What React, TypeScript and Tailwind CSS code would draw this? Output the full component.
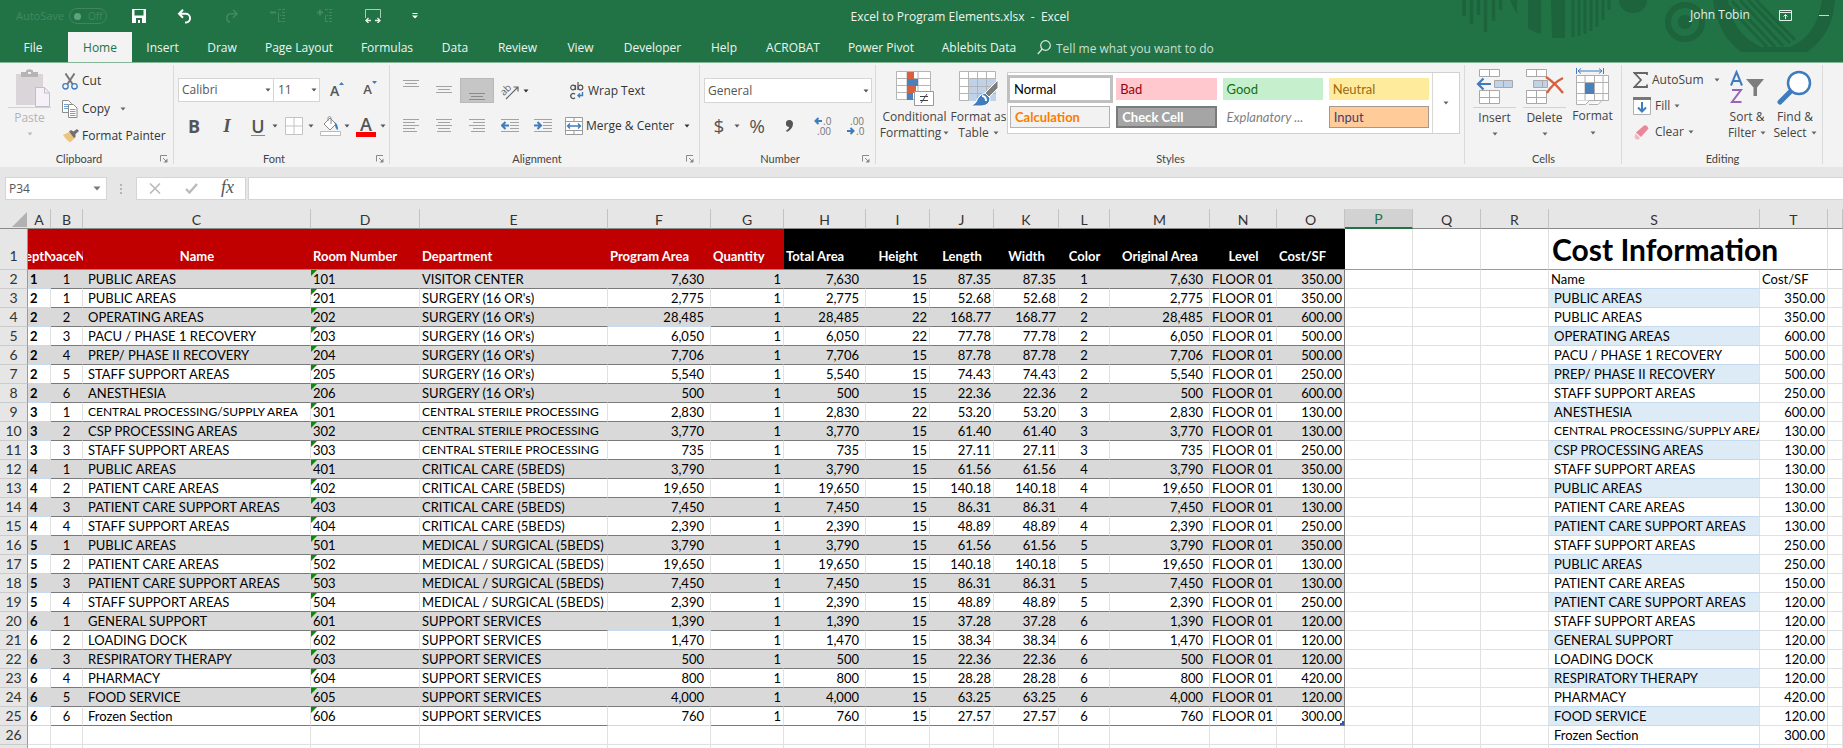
import React from "react";
import clsx from "clsx";

const TABS = [
  { label: "File", width: "w-[68px] pr-[2px]" },
  { label: "Home", width: "w-[64px]", active: true },
  { label: "Insert", width: "w-[61px]" },
  { label: "Draw", width: "w-[58px]" },
  { label: "Page Layout", width: "w-[96px]" },
  { label: "Formulas", width: "w-[80px]" },
  { label: "Data", width: "w-[56px]" },
  { label: "Review", width: "w-[69px]" },
  { label: "View", width: "w-[57px]" },
  { label: "Developer", width: "w-[87px]" },
  { label: "Help", width: "w-[56px]" },
  { label: "ACROBAT", width: "w-[82px]" },
  { label: "Power Pivot", width: "w-[94px]" },
  { label: "Ablebits Data", width: "w-[102px]" },
];

const COLUMNS = [
  { id: "A", width: "w-[23px]" },
  { id: "B", width: "w-[32px]" },
  { id: "C", width: "w-[228px]" },
  { id: "D", width: "w-[109px]" },
  { id: "E", width: "w-[188px]" },
  { id: "F", width: "w-[103px]" },
  { id: "G", width: "w-[73px]" },
  { id: "H", width: "w-[82px]" },
  { id: "I", width: "w-[64px]" },
  { id: "J", width: "w-[64px]" },
  { id: "K", width: "w-[65px]" },
  { id: "L", width: "w-[51px]" },
  { id: "M", width: "w-[100px]" },
  { id: "N", width: "w-[67px]" },
  { id: "O", width: "w-[68px]" },
  { id: "P", width: "w-[68px]", selected: true },
  { id: "Q", width: "w-[68px]" },
  { id: "R", width: "w-[68px]" },
  { id: "S", width: "w-[211px]" },
  { id: "T", width: "w-[68px]" },
  { id: "", width: "" },
];

const HEADINGS = [
  { text: "eptN", cell: "justify-center" },
  { text: "paceN", cell: "justify-center" },
  { text: "Name", cell: "justify-center" },
  { text: "Room Number", cell: "pl-[2px]" },
  { text: "Department", cell: "pl-[2px]" },
  { text: "Program Area", cell: "pl-[2px]" },
  { text: "Quantity", cell: "pl-[2px]" },
  { text: "Total Area", cell: "pl-[2px]" },
  { text: "Height", cell: "justify-center" },
  { text: "Length", cell: "justify-center" },
  { text: "Width", cell: "justify-center" },
  { text: "Color", cell: "justify-center" },
  { text: "Original Area", cell: "justify-center" },
  { text: "Level", cell: "justify-center" },
  { text: "Cost/SF", cell: "pl-[2px]" },
];

type Room = [number, number, string, string, string, string, number, string, string];

// dept, space, name, room number, department, area, height, length, cost
const ROOMS: Room[] = [
  [1, 1, "PUBLIC AREAS", "101", "VISITOR CENTER", "7,630", 15, "87.35", "350.00"],
  [2, 1, "PUBLIC AREAS", "201", "SURGERY (16 OR's)", "2,775", 15, "52.68", "350.00"],
  [2, 2, "OPERATING AREAS", "202", "SURGERY (16 OR's)", "28,485", 22, "168.77", "600.00"],
  [2, 3, "PACU / PHASE 1 RECOVERY", "203", "SURGERY (16 OR's)", "6,050", 22, "77.78", "500.00"],
  [2, 4, "PREP/ PHASE II RECOVERY", "204", "SURGERY (16 OR's)", "7,706", 15, "87.78", "500.00"],
  [2, 5, "STAFF SUPPORT AREAS", "205", "SURGERY (16 OR's)", "5,540", 15, "74.43", "250.00"],
  [2, 6, "ANESTHESIA", "206", "SURGERY (16 OR's)", "500", 15, "22.36", "600.00"],
  [3, 1, "CENTRAL PROCESSING/SUPPLY AREA", "301", "CENTRAL STERILE PROCESSING", "2,830", 22, "53.20", "130.00"],
  [3, 2, "CSP PROCESSING AREAS", "302", "CENTRAL STERILE PROCESSING", "3,770", 15, "61.40", "130.00"],
  [3, 3, "STAFF SUPPORT AREAS", "303", "CENTRAL STERILE PROCESSING", "735", 15, "27.11", "250.00"],
  [4, 1, "PUBLIC AREAS", "401", "CRITICAL CARE (5BEDS)", "3,790", 15, "61.56", "350.00"],
  [4, 2, "PATIENT CARE AREAS", "402", "CRITICAL CARE (5BEDS)", "19,650", 15, "140.18", "130.00"],
  [4, 3, "PATIENT CARE SUPPORT AREAS", "403", "CRITICAL CARE (5BEDS)", "7,450", 15, "86.31", "130.00"],
  [4, 4, "STAFF SUPPORT AREAS", "404", "CRITICAL CARE (5BEDS)", "2,390", 15, "48.89", "250.00"],
  [5, 1, "PUBLIC AREAS", "501", "MEDICAL / SURGICAL (5BEDS)", "3,790", 15, "61.56", "350.00"],
  [5, 2, "PATIENT CARE AREAS", "502", "MEDICAL / SURGICAL (5BEDS)", "19,650", 15, "140.18", "130.00"],
  [5, 3, "PATIENT CARE SUPPORT AREAS", "503", "MEDICAL / SURGICAL (5BEDS)", "7,450", 15, "86.31", "130.00"],
  [5, 4, "STAFF SUPPORT AREAS", "504", "MEDICAL / SURGICAL (5BEDS)", "2,390", 15, "48.89", "250.00"],
  [6, 1, "GENERAL SUPPORT", "601", "SUPPORT SERVICES", "1,390", 15, "37.28", "120.00"],
  [6, 2, "LOADING DOCK", "602", "SUPPORT SERVICES", "1,470", 15, "38.34", "120.00"],
  [6, 3, "RESPIRATORY THERAPY", "603", "SUPPORT SERVICES", "500", 15, "22.36", "120.00"],
  [6, 4, "PHARMACY", "604", "SUPPORT SERVICES", "800", 15, "28.28", "420.00"],
  [6, 5, "FOOD SERVICE", "605", "SUPPORT SERVICES", "4,000", 15, "63.25", "120.00"],
  [6, 6, "Frozen Section", "606", "SUPPORT SERVICES", "760", 15, "27.57", "300.00"],
];

// Starts on sheet row 3, one row below the room list
const COSTS = [
  "350.00", "350.00", "600.00", "500.00", "500.00", "250.00", "600.00", "130.00",
  "130.00", "130.00", "130.00", "130.00", "130.00", "250.00", "250.00", "150.00",
  "120.00", "120.00", "120.00", "120.00", "120.00", "420.00", "120.00", "300.00",
];

// Rows where the F column keeps the thin table rule
const THIN_F = [4, 20, 25];

// The widest names drop a size so they stay inside their column
const SHRINK = ["CENTRAL PROCESSING/SUPPLY AREA", "CENTRAL STERILE PROCESSING"];

function Caret({ className = "text-[#666]" }: { className?: string }) {
  return (
    <svg width="6" height="4" viewBox="0 0 6 4" className={clsx("shrink-0", className)}>
      <path d="M0.5 0.5h5L3 3.5z" fill="currentColor" />
    </svg>
  );
}

function Launcher() {
  return (
    <button aria-label="More options" className="absolute right-[6px] bottom-[4px]">
      <svg width="8" height="8" viewBox="0 0 8 8" fill="none" stroke="#8a8a8a">
        <path d="M0.5 6.5V0.5H7M3 3l3 3" />
        <path d="M7.5 3.5v4h-4z" fill="#8a8a8a" stroke="none" />
      </svg>
    </button>
  );
}

function Group({
  label,
  width,
  launcher,
  children,
}: {
  label: string;
  width: string;
  launcher?: boolean;
  children: React.ReactNode;
}) {
  return (
    <section className={clsx("relative flex h-[104px] flex-col", width)}>
      <div className="flex-1 whitespace-nowrap">{children}</div>
      <div
        className={clsx(
          "h-[16px] text-center font-[Lato] text-[11px] leading-[16px] text-[#444]",
          launcher && "pr-[16px]",
        )}
      >
        {label}
      </div>
      {launcher && <Launcher />}
      <span className="absolute top-[2px] right-0 bottom-[3px] w-px bg-[#dadada]" />
    </section>
  );
}

function Lines({ rows }: { rows: [number, number][] }) {
  return (
    <svg width="18" height="14" viewBox="0 0 18 14" stroke="#a3a3a3">
      {rows.map(([x, w], i) => (
        <path key={i} d={`M${x} ${i * 3 + 0.5}h${w}`} />
      ))}
    </svg>
  );
}

function IndentIcon({ out }: { out?: boolean }) {
  return (
    <svg width="18" height="14" viewBox="0 0 18 14" fill="none">
      <path d="M0 0.5h18M9 3.5h9M9 6.5h9M9 9.5h9M0 12.5h18" stroke="#a3a3a3" />
      {out ? (
        <path d="M8 6.5H1.5M4.5 3L1 6.5 4.5 10" stroke="#3f7cbd" strokeWidth="2" />
      ) : (
        <path d="M0 6.5h6.5M3.5 3L7 6.5 3.5 10" stroke="#3f7cbd" strokeWidth="2" />
      )}
    </svg>
  );
}

function TitleBar() {
  return (
    <div className="relative flex h-[32px] items-center">
      <div className="flex w-[430px] items-center text-[#4d9a6f]">
        <label className="ml-[16px] flex items-center text-[11px] text-[#43885f]">
          <span className="w-[53px]">AutoSave</span>
          <span className="flex h-[16px] w-[38px] items-center gap-[7px] rounded-full border border-[#3f865d] pl-[4px] text-[10px]">
            <span className="h-[7px] w-[7px] rounded-full bg-[#5fa27f]" />
            Off
          </span>
          <input type="checkbox" className="sr-only" />
        </label>
        <div className="ml-[25px] flex w-[286px] items-center justify-between text-white">
          <button aria-label="Save">
            <svg width="14" height="14" viewBox="0 0 14 14">
              <path d="M0 0h14v14H0z" fill="#fff" />
              <path d="M2.5 1h9v5.500h-9zM4 9h6v5H8V11H6v3H4z" fill="#217346" />
            </svg>
          </button>
          <button aria-label="Undo">
            <svg width="15" height="15" viewBox="0 0 15 15" fill="none" stroke="#fff" strokeWidth="2">
              <path d="M6 0.800L2 4.800l4 4M2 4.800h6.500a4.300 4.300 0 0 1 0.500 8.600H8" />
            </svg>
          </button>
          <button aria-label="Redo">
            <svg width="15" height="15" viewBox="0 0 15 15" fill="none" stroke="#43885f" strokeWidth="1.600">
              <path d="M9 0.800l4 4-4 4M13 4.800H6.500A4.300 4.300 0 0 0 6 13.200" />
            </svg>
          </button>
          <button aria-label="Ungroup">
            <svg width="16" height="14" viewBox="0 0 16 14" stroke="#43885f" fill="none">
              <path d="M0 3.500h6" strokeWidth="2" />
              <path d="M8 0.500h3M8 12.500h3M10 6.500h1M12 0.500h3M12 3.500h3M12 6.500h3M12 9.500h3M12 12.500h3M8.500 3v9" />
            </svg>
          </button>
          <button aria-label="Group">
            <svg width="16" height="14" viewBox="0 0 16 14" stroke="#43885f" fill="none">
              <path d="M0 3.500h6M3 0.500v6" strokeWidth="2" />
              <path d="M8 0.500h3M8 12.500h3M10 6.500h1M12 0.500h3M12 3.500h3M12 6.500h3M12 9.500h3M12 12.500h3M8.500 6v6" />
            </svg>
          </button>
          <button aria-label="Fit width">
            <svg width="16" height="14" viewBox="0 0 16 14" stroke="#e4efe8" fill="none">
              <path d="M0.500 9V0.500h15V9" stroke="#a9cdb8" />
              <path d="M1 11.500h5M3.500 9L1 11.500 3.500 14M15 11.500h-5M12.500 9l2.500 2.500-2.500 2.500" strokeWidth="1.400" />
            </svg>
          </button>
          <button aria-label="Customize toolbar">
            <svg width="6" height="6" viewBox="0 0 6 6">
              <path d="M0.500 0h5v1h-5zM0 2.500h6L3 5.500z" fill="#fff" />
            </svg>
          </button>
        </div>
      </div>
      <h1 className="flex-1 pt-[2px] text-center text-[12px] whitespace-pre text-[#eef5f0]">
        Excel to Program Elements.xlsx{"  -  "}Excel
      </h1>
      <div className="flex w-[353px] items-center justify-end pr-[14px] pb-[2px] text-[12px] text-[#e3efe8]">
        <span className="w-[89px]">John Tobin</span>
        <button aria-label="Ribbon display options">
          <svg width="13" height="11" viewBox="0 0 13 11" fill="none" stroke="#e3efe8">
            <path d="M0.500 0.500h12v10h-12zM1 2.500h11M6.500 9V4.500M4.500 6.500l2-2 2 2" />
          </svg>
        </button>
        <button aria-label="Minimize" className="ml-[27px] h-px w-[10px] bg-[#c5dccf]" />
      </div>
    </div>
  );
}

function Artwork() {
  return (
    <svg
      className="pointer-events-none absolute top-0 right-0"
      width="423"
      height="62"
      viewBox="0 0 423 62"
      fill="none"
      stroke="#1d633c"
    >
      <path d="M44 0v16M51.500 0v24M58.500 0v15M65.500 0v32M73.500 0v21M80.500 0v10" strokeWidth="3.500" />
      <path d="M90 0h7v14Q93 8 90 0zM108 0h13v34q-8-2-13-6zM131 0h14v38h-13z" fill="#1d633c" stroke="none" />
      <path d="M153 0v37M159 0v36M165 0v34M171 0v31M177 0v27M183 0v20M189 0v10" strokeWidth="3" />
      <path d="M199 0h28a14 13 0 0 1-28 0z" fill="#1d633c" stroke="none" />
      <circle cx="265" cy="22" r="17" strokeWidth="6" />
      <circle cx="265" cy="22" r="7" fill="#1d633c" stroke="none" />
      <path
        d="M293 0h15q4 34 33 47h29Q397 36 402 0h13q-2 34-28 52h-66Q297 34 293 0z"
        fill="#1d633c"
        stroke="none"
      />
      <path d="M304 2l43 45M312 1l43 46M320 0l43 46M328 0l42 43M336 0l39 40" strokeWidth="3" />
    </svg>
  );
}

function TabStrip() {
  return (
    <nav className="relative flex h-[30px] text-[12px] text-[#eef5f0]">
      {TABS.map((t) => (
        <button
          key={t.label}
          className={clsx(
            "pt-[2px] text-center whitespace-nowrap",
            t.width,
            t.active && "bg-[#f3f3f3] text-[#217346]",
          )}
        >
          {t.label}
        </button>
      ))}
      <label className="ml-[7px] flex items-center gap-[5px] pt-[4px]">
        <svg width="14" height="15" viewBox="0 0 14 15" fill="none" stroke="#dcebe2" strokeWidth="1.200" className="mb-[4px]">
          <circle cx="8.500" cy="5.500" r="4.800" />
          <path d="M5.200 9L0.800 14" />
        </svg>
        <input
          className="w-[180px] bg-transparent outline-none placeholder:text-[#c9dfd2]"
          placeholder="Tell me what you want to do"
        />
      </label>
    </nav>
  );
}

function ClipboardGroup() {
  return (
    <Group label="Clipboard" width="w-[174px]" launcher>
      <div className="flex text-[#333]">
        <button className="ml-[8px] flex w-[43px] flex-col items-center pt-[6px] text-[#b3b3b3]">
          <svg width="36" height="38" viewBox="0 0 36 38" className="ml-[6px]">
            <path d="M1 5h27v31H1z" fill="#d9d5d9" />
            <path d="M6 3h5V1.500Q14.500-1 18 1.500V3h5v5H6z" fill="#b5b5b5" />
            <path d="M13 3h3v2h-3z" fill="#f3f3f3" />
            <path d="M20.500 18.500h9l5 5.500v13.500h-14z" fill="#f6f0f8" stroke="#c4bdc6" />
            <path d="M29.500 18.500v5.500h5" fill="none" stroke="#c4bdc6" />
          </svg>
          <span className="w-full border-t border-[#d2d2d2] text-[12px] leading-[20px]">Paste</span>
          <Caret className="mt-[4px] text-[#bbb]" />
        </button>
        <div className="ml-[11px] flex flex-col pt-[4px] text-[12px]">
          <button className="flex h-[28px] items-center gap-[4px]">
            <svg width="16" height="17" viewBox="0 0 16 17" fill="none">
              <path d="M3.500 0.500L10.500 11M12.500 0.500L5.500 11" stroke="#777" strokeWidth="2" />
              <circle cx="3.500" cy="13.300" r="2.700" stroke="#3f7cbd" strokeWidth="1.300" />
              <circle cx="12.500" cy="13.300" r="2.700" stroke="#3f7cbd" strokeWidth="1.300" />
            </svg>
            Cut
          </button>
          <button className="flex h-[27px] items-center gap-[4px]">
            <svg width="16" height="18" viewBox="0 0 16 18" fill="#fff" stroke="#8d8d8d">
              <path d="M0.500 0.500h6l3 3v9h-9z" />
              <path d="M2 4.500h4M2 6.500h4M2 8.500h4" stroke="#6fa3d6" />
              <path d="M6.500 4.500h5l3.500 3.500v9.500H6.500z" />
              <path d="M8 9.500h5.500M8 11.500h5.500M8 13.500h5.500M8 15.500h5.500" stroke="#6fa3d6" />
            </svg>
            Copy
            <Caret className="ml-[6px] text-[#666]" />
          </button>
          <button className="flex h-[27px] items-center gap-[3px]">
            <svg width="17" height="14" viewBox="0 0 17 14">
              <path d="M1 6l6-3 6 6-5 4.500Q4 11 1 6z" fill="#ecc47c" />
              <path d="M7 2.500L9 1l2.500 1.500L15 0l2 2-3.500 3v3L12 9z" fill="#707070" />
            </svg>
            Format Painter
          </button>
        </div>
      </div>
    </Group>
  );
}

function FontGroup() {
  return (
    <Group label="Font" width="w-[216px]" launcher>
      <div className="mt-[15px] flex h-[24px] items-center pl-[4px] text-[12px] text-[#555]">
        <label className="relative flex h-[24px] w-[96px] items-center border border-[#d5d5d5] bg-white">
          <select aria-label="Font name" className="w-full appearance-none pl-[3px] outline-none">
            <option>Calibri</option>
          </select>
          <Caret className="absolute right-[2px]" />
        </label>
        <label className="relative flex h-[24px] w-[46px] items-center border border-l-0 border-[#d5d5d5] bg-white">
          <select aria-label="Font size" className="w-full appearance-none pl-[4px] outline-none">
            <option>11</option>
          </select>
          <Caret className="absolute right-[2px]" />
        </label>
        <button aria-label="Increase font size" className="ml-[10px] flex text-[14px] font-semibold">
          A
          <svg width="5" height="3" viewBox="0 0 5 3" className="mt-[2px]">
            <path d="M0 3L2.500 0 5 3z" fill="#3f7cbd" />
          </svg>
        </button>
        <button aria-label="Decrease font size" className="ml-[19px] flex text-[13px] font-semibold">
          A
          <svg width="5" height="3" viewBox="0 0 5 3" className="mt-[1px]">
            <path d="M0 0h5L2.500 3z" fill="#3f7cbd" />
          </svg>
        </button>
      </div>
      <div className="mt-[12px] flex h-[24px] items-center pl-[13px] text-[18px] text-[#555]">
        <button className="w-[14px] font-bold">B</button>
        <button className="ml-[19px] w-[14px] font-[Liberation_Serif] text-[19px] font-bold italic">I</button>
        <button className="ml-[17px] w-[14px] border-b border-[#888] leading-[18px] font-semibold">U</button>
        <Caret className="ml-[7px]" />
        <button aria-label="Borders" className="ml-[7px]">
          <svg width="18" height="18" viewBox="0 0 18 18" fill="#fff" stroke="#c3c3c3">
            <path d="M0.500 0.500h17v17h-17zM9 0v18M0 9h18" />
          </svg>
        </button>
        <Caret className="ml-[5px]" />
        <button aria-label="Fill color" className="ml-[6px]">
          <svg width="21" height="20" viewBox="0 0 21 20" fill="#fff" stroke="#8a8a8a">
            <path d="M4 8l6-6 6 6-6 6zM8 5V1.500q1.500-2 3 0V8" />
            <path d="M14 6q4 1 4 8-3-1-3-6z" fill="#3f7cbd" stroke="none" />
            <path d="M0.500 15.500h20v4h-20z" stroke="#bbb" />
          </svg>
        </button>
        <Caret className="ml-[3px]" />
        <button aria-label="Font color" className="ml-[6px] w-[20px] border-b-[5px] border-[#f00] leading-[16px] font-semibold">
          A
        </button>
        <Caret className="ml-[4px]" />
      </div>
    </Group>
  );
}

function AlignmentGroup() {
  return (
    <Group label="Alignment" width="w-[310px]" launcher>
      <div className="mt-[15px] flex h-[25px] items-center pl-[4px] text-[12px] text-[#333]">
        <button aria-label="Top align" className="flex h-full w-[33px] items-start justify-center pt-[2px]">
          <Lines rows={[[1, 16], [3, 12], [1, 16]]} />
        </button>
        <button aria-label="Middle align" className="flex h-full w-[33px] items-start justify-center pt-[8px]">
          <Lines rows={[[1, 16], [3, 12], [1, 16]]} />
        </button>
        <button
          aria-label="Bottom align"
          className="flex h-full w-[34px] items-start justify-center border border-[#b9b9b9] bg-[#c6c6c6] pt-[14px]"
        >
          <svg width="18" height="8" viewBox="0 0 18 8" stroke="#8c8c8c">
            <path d="M1 0.500h16M3 3.500h12M1 6.500h16" />
          </svg>
        </button>
        <button aria-label="Orientation" className="ml-[7px]">
          <svg width="19" height="19" viewBox="0 0 19 19" fill="none" stroke="#666" strokeWidth="1.200" className="overflow-visible">
            <text x="-1" y="12" transform="rotate(-45 5 9)" fontSize="10" fill="#666" stroke="none">
              ab
            </text>
            <path d="M5 18L17 6M12.500 6H17v4.500" />
          </svg>
        </button>
        <Caret className="ml-[3px]" />
        <button className="ml-[41px] flex items-center gap-[4px]">
          <svg width="14" height="18" viewBox="0 0 14 18" fill="none" className="overflow-visible">
            <circle cx="3" cy="5.500" r="2.300" stroke="#555" strokeWidth="1.200" />
            <path d="M5.500 3v5M8 0v8" stroke="#555" strokeWidth="1.200" />
            <circle cx="10.500" cy="5.500" r="2.300" stroke="#555" strokeWidth="1.200" />
            <path d="M5 12.200a2.500 2.500 0 1 0 0 3.600" stroke="#555" strokeWidth="1.200" />
            <path d="M12.500 10v3.500H8M10 11.500L8 13.500l2 2" stroke="#3f7cbd" strokeWidth="1.400" />
          </svg>
          Wrap Text
        </button>
      </div>
      <div className="mt-[11px] flex h-[24px] items-center pl-[4px] text-[12px] text-[#333]">
        <button aria-label="Align left" className="flex w-[33px] justify-center">
          <Lines rows={[[1, 16], [1, 12], [1, 16], [1, 12], [1, 14]]} />
        </button>
        <button aria-label="Center" className="flex w-[33px] justify-center">
          <Lines rows={[[1, 16], [3, 12], [1, 16], [3, 12], [2, 14]]} />
        </button>
        <button aria-label="Align right" className="flex w-[34px] justify-center">
          <Lines rows={[[1, 16], [5, 12], [1, 16], [5, 12], [3, 14]]} />
        </button>
        <button aria-label="Decrease indent" className="ml-[7px]">
          <IndentIcon out />
        </button>
        <button aria-label="Increase indent" className="ml-[15px]">
          <IndentIcon />
        </button>
        <button className="ml-[13px] flex items-center gap-[3px]">
          <svg width="18" height="18" viewBox="0 0 18 18" fill="#fff" stroke="#9a9a9a">
            <path d="M0.500 0.500h17v17h-17zM9 0v4M9 14v4M0 4.500h18M0 13.500h18" />
            <path d="M2.500 9h13M5 6.500L2.500 9 5 11.500M13 6.500L15.500 9 13 11.500" fill="none" stroke="#3f7cbd" strokeWidth="1.400" />
          </svg>
          Merge &amp; Center
        </button>
        <Caret className="ml-[10px]" />
      </div>
    </Group>
  );
}

function NumberGroup() {
  return (
    <Group label="Number" width="w-[176px]" launcher>
      <label className="relative mt-[15px] ml-[4px] flex h-[25px] w-[168px] items-center border border-[#d5d5d5] bg-white text-[12px] text-[#555]">
        <select aria-label="Number format" className="w-full appearance-none pl-[3px] outline-none">
          <option>General</option>
        </select>
        <Caret className="absolute right-[2px]" />
      </label>
      <div className="mt-[11px] flex h-[24px] items-center pl-[13px] text-[19px] text-[#555]">
        <button className="w-[12px]">$</button>
        <Caret className="ml-[9px]" />
        <button className="ml-[8px] w-[18px]">%</button>
        <button aria-label="Comma style" className="ml-[19px]">
          <svg width="9" height="12" viewBox="0 0 9 12">
            <path d="M4.500 0a3.500 3.500 0 0 1 3.500 3.800Q8 9 2 12l-1-1.500Q4 9 4.300 7A3.500 3.500 0 1 1 4.500 0z" fill="#555" />
          </svg>
        </button>
        <button aria-label="Increase decimal" className="ml-[20px]">
          <svg width="18" height="20" viewBox="0 0 18 20" fill="#777" className="overflow-visible">
            <text x="9" y="9" fontSize="10">
              .0
            </text>
            <text x="3" y="19" fontSize="10">
              .00
            </text>
            <path d="M8 5H1.500M4.500 2L1.500 5l3 3" fill="none" stroke="#3f7cbd" strokeWidth="2" />
          </svg>
        </button>
        <button aria-label="Decrease decimal" className="ml-[15px]">
          <svg width="18" height="20" viewBox="0 0 18 20" fill="#777" className="overflow-visible">
            <text x="3" y="9" fontSize="10">
              .00
            </text>
            <text x="9" y="19" fontSize="10">
              .0
            </text>
            <path d="M0 15h6.500M3.500 12l3 3-3 3" fill="none" stroke="#3f7cbd" strokeWidth="2" />
          </svg>
        </button>
      </div>
    </Group>
  );
}

const STYLE_CELLS = [
  { label: "Normal", cell: "bg-white text-black outline-3 outline-[#c0c0c0]" },
  { label: "Bad", cell: "bg-[#ffc7ce] text-[#9c0006]" },
  { label: "Good", cell: "bg-[#c6efce] text-[#107010]" },
  { label: "Neutral", cell: "bg-[#ffeb9c] text-[#9c6a10]" },
  { label: "Calculation", cell: "border border-[#b2b2b2] bg-[#f2f2f2] font-bold text-[#fa7d00]" },
  { label: "Check Cell", cell: "border-2 border-[#7b7b7b] bg-[#a5a5a5] font-bold text-white" },
  { label: "Explanatory ...", cell: "italic text-[#7f7f7f]" },
  { label: "Input", cell: "border border-[#a8988c] bg-[#ffcc99] text-[#3f3f76]" },
];

function StylesGroup() {
  return (
    <Group label="Styles" width="flex-1">
      <div className="flex text-[12px] leading-[16px] text-[#444]">
        <button className="ml-[3px] flex w-[71px] flex-col items-center pt-[8px]">
          <svg width="38" height="36" viewBox="0 0 38 36" fill="#fff" stroke="#b5b5b5">
            <path d="M0.500 0.500h34v28h-34zM0 7.500h35M0 14.500h35M0 21.500h35M11 0v29M22 0v29" />
            <path d="M11 1h7v7h-7zM11 15h9v7h-9z" fill="#d95f3f" stroke="none" />
            <path d="M11 8h11v7H11zM11 22h6v7h-6z" fill="#4a80bb" stroke="none" />
            <path d="M18.500 20.500h19v14h-19z" stroke="#9a9a9a" />
            <path d="M24 25.500h8M24 29.500h8M31 23l-6 9" fill="none" stroke="#444" />
          </svg>
          <span className="mt-[2px]">Conditional</span>
          <span className="flex items-center gap-[2px]">
            Formatting <Caret />
          </span>
        </button>
        <button className="flex w-[57px] flex-col items-center pt-[8px]">
          <svg width="40" height="36" viewBox="0 0 40 36" fill="#fff" stroke="#b5b5b5">
            <path d="M0.500 0.500h36v29h-36z" />
            <path d="M10 7h27v23H10z" fill="#bfd2e8" stroke="none" />
            <path d="M0 7.500h37M0 15.500h37M0 22.500h37M9.500 0v30M18.500 0v30M27.500 0v30" fill="none" />
            <path d="M39 9v8l-9 9-4-4z" fill="#7d7d7d" stroke="#fff" />
            <path d="M26 22l5 5q0 7-8 8H12q6-3 7-8 3-4 7-5z" fill="#3f7cbd" stroke="#fff" />
            <path d="M23 25q4 0 4 5" fill="none" stroke="#fff" strokeWidth="2" />
          </svg>
          <span className="mt-[2px]">Format as</span>
          <span className="flex items-center gap-[4px]">
            Table <Caret />
          </span>
        </button>
        <div className="mt-[9px] mr-[5px] flex h-[62px] flex-1 border border-[#d0d0d0] bg-white">
          <div className="grid flex-1 grid-cols-4 gap-x-[6px] gap-y-[6px] py-[5px] pr-[3px] pl-[2px]">
            {STYLE_CELLS.map((s) => (
              <button
                key={s.label}
                className={clsx("h-[22px] pl-[4px] text-left font-[Lato] text-[13px] leading-[18px]", s.cell)}
              >
                {s.label}
              </button>
            ))}
          </div>
          <button aria-label="More styles" className="flex w-[27px] items-center justify-center border-l border-[#d8d8d8]">
            <Caret />
          </button>
        </div>
      </div>
    </Group>
  );
}

function CellsGroup() {
  return (
    <Group label="Cells" width="w-[157px]">
      <div className="flex text-[12px] text-[#444]">
        <button className="ml-[8px] flex w-[43px] flex-col items-center pt-[6px]">
          <svg width="37" height="38" viewBox="0 0 37 38" fill="#fff" stroke="#a8a8a8">
            <path d="M3.500 0.500h20v7h-20zM13.500 0v7M3.500 21.500h20v13h-20zM13.500 21v14M3 28.500h21" />
            <path d="M18.500 11.500h18v7h-18zM27.500 11v8" fill="#bfd2e8" />
            <path d="M15 15H2.500M7.500 9.500L2 15l5.500 5.500" fill="none" stroke="#3f7cbd" strokeWidth="2.200" />
          </svg>
          <span className="w-full border-t border-[#d2d2d2] leading-[20px]">Insert</span>
          <Caret className="mt-[4px] text-[#666]" />
        </button>
        <button className="ml-[7px] flex w-[43px] flex-col items-center pt-[6px]">
          <svg width="38" height="38" viewBox="0 0 38 38" fill="#fff" stroke="#a8a8a8">
            <path d="M0.500 0.500h20v7h-20zM10.500 0v7M0.500 21.500h20v13h-20zM10.500 21v14M0 28.500h21" />
            <path d="M7.500 11.500h14v7h-14zM16.500 11v8" fill="#bfd2e8" />
            <path d="M20 8q9 6 17 16M37 9q-10 5-16 15" fill="none" stroke="#d95f3f" strokeWidth="2.400" />
          </svg>
          <span className="w-full border-t border-[#d2d2d2] leading-[20px]">Delete</span>
          <Caret className="mt-[4px] text-[#666]" />
        </button>
        <button className="ml-[5px] flex w-[43px] flex-col items-center pt-[5px]">
          <svg width="34" height="38" viewBox="0 0 34 38" fill="#fff" stroke="#b0b0b0">
            <path d="M0.500 7.500h32v25h-32zM9 7v25M18.500 7v25M27 7v25M0 14.500h33M0 25.500h33" />
            <path d="M0.500 32.500v4h9l4-4M13 36.500h9l4-4" />
            <path d="M9 15h9v11H9z" fill="#4a80bb" stroke="none" />
            <path d="M0.500 0v6M27.500 0v6M2 3h24M5 0.500L2 3l3 2.500M23 0.500L26 3l-3 2.500" fill="none" stroke="#3f7cbd" />
          </svg>
          <span className="leading-[20px]">Format</span>
          <Caret className="mt-[5px] text-[#666]" />
        </button>
      </div>
    </Group>
  );
}

function EditingGroup() {
  return (
    <Group label="Editing" width="w-[201px]">
      <div className="flex text-[12px] text-[#444]">
        <div className="flex w-[101px] flex-col pt-[4px] pl-[11px]">
          <button className="flex h-[26px] items-center">
            <svg width="15" height="16" viewBox="0 0 15 16" fill="none" stroke="#666" strokeWidth="1.800">
              <path d="M14 3V1H1.500L8 8l-6.500 7H14v-2.500" />
            </svg>
            <span className="ml-[4px]">AutoSum</span>
            <Caret className="ml-[10px] text-[#666]" />
          </button>
          <button className="flex h-[26px] items-center gap-[4px]">
            <svg width="18" height="18" viewBox="0 0 18 18" fill="#fff">
              <path d="M0.500 0.500h17v17h-17z" stroke="#b0b0b0" />
              <path d="M0 0h18v3H0z" fill="#777" />
              <path d="M9 5v9M5 10.500l4 4 4-4" fill="none" stroke="#3f7cbd" strokeWidth="2" />
            </svg>
            Fill
            <Caret />
          </button>
          <button className="flex h-[26px] items-center gap-[4px]">
            <svg width="18" height="15" viewBox="0 0 18 15">
              <path d="M11 0.500q3-1 4.500 3L8 12 3 7.500z" fill="#e8879a" />
              <path d="M2.500 8.500L7 13l-1.500 1.500H3L1.500 12z" fill="#f2b7c3" />
            </svg>
            Clear
            <Caret />
          </button>
        </div>
        <button className="flex w-[48px] flex-col items-center pt-[7px] leading-[16px]">
          <svg width="36" height="37" viewBox="0 0 36 37">
            <g fill="none" strokeWidth="2">
              <path d="M2 15.500L7.500 2 13 15.500M4 11h7" stroke="#3f7cbd" />
              <path d="M3 20h9L3 32h9.500" stroke="#9b63b5" />
            </g>
            <path d="M17 9h18l-7 8.500v8.500h-3.500v-8.500z" fill="#7d7d7d" />
          </svg>
          <span className="mt-[2px]">Sort &amp;</span>
          <span className="flex items-center gap-[4px]">
            Filter <Caret />
          </span>
        </button>
        <button className="flex w-[48px] flex-col items-center pt-[7px] leading-[16px]">
          <svg width="36" height="37" viewBox="0 0 36 37">
            <path d="M13 22L3 32" stroke="#3f7cbd" strokeWidth="5" strokeLinecap="round" />
            <circle cx="22" cy="13" r="11" fill="#fff" stroke="#3f7cbd" strokeWidth="2.500" />
          </svg>
          <span className="mt-[2px]">Find &amp;</span>
          <span className="flex items-center gap-[4px]">
            Select <Caret />
          </span>
        </button>
      </div>
    </Group>
  );
}

function FormulaBar() {
  return (
    <div className="flex h-[42px] shrink-0 items-start bg-[#e6e6e6] pt-[10px] pl-[5px] text-[12px] text-[#555]">
      <label className="relative flex h-[23px] w-[102px] items-center border border-[#d5d5d5] bg-white">
        <input aria-label="Name box" defaultValue="P34" className="w-full bg-transparent pl-[3px] outline-none" />
        <svg width="8" height="5" viewBox="0 0 8 5" className="absolute right-[5px]">
          <path d="M0.500 0.500h7L4 4.500z" fill="#777" />
        </svg>
      </label>
      <span className="ml-[13px] flex h-[23px] flex-col justify-center gap-[2px]">
        <span className="h-[2px] w-[2px] bg-[#b5b5b5]" />
        <span className="h-[2px] w-[2px] bg-[#b5b5b5]" />
        <span className="h-[2px] w-[2px] bg-[#b5b5b5]" />
      </span>
      <div className="ml-[14px] flex h-[23px] w-[110px] items-center border border-[#d5d5d5] bg-white pl-[12px]">
        <button aria-label="Cancel">
          <svg width="12" height="11" viewBox="0 0 12 11" fill="none" stroke="#bbb" strokeWidth="1.600">
            <path d="M1 0.500l10 10M11 0.500L1 10.500" />
          </svg>
        </button>
        <button aria-label="Enter" className="ml-[24px]">
          <svg width="13" height="11" viewBox="0 0 13 11" fill="none" stroke="#bbb" strokeWidth="2.400">
            <path d="M1 6l3.500 3.500L12 1" />
          </svg>
        </button>
        <button className="ml-[23px] pb-[3px] font-[Liberation_Serif] text-[18px] leading-[18px] italic">fx</button>
      </div>
      <input aria-label="Formula" className="ml-[2px] h-[23px] flex-1 border border-r-0 border-[#d5d5d5] bg-white outline-none" />
    </div>
  );
}

function Blank({ head }: { head?: boolean }) {
  return <td className={clsx("border-r border-b border-r-[#e1e1e1]", head ? "border-b-[#9a9a9a]" : "border-b-[#e1e1e1]")} />;
}

function RowNumber({ n }: { n: number }) {
  return (
    <th
      className={clsx(
        "border-r border-b border-r-[#9a9a9a] border-b-[#cbcbcb] bg-[#e6e6e6] text-center text-[14px] font-normal text-[#333]",
        n === 1 ? "pb-[4px] align-bottom" : "p-0",
      )}
    >
      {n}
    </th>
  );
}

function RoomCells({ room, row }: { room: Room; row: number }) {
  const [dept, space, name, no, department, area, height, length, cost] = room;
  const cells: [React.ReactNode, string][] = [
    [dept, "pl-[2px] text-left font-bold"],
    [space, "text-center"],
    [name, clsx("pl-[5px] text-left", SHRINK.includes(name) && "text-[12px]")],
    [no, "pl-[2px] text-left"],
    [department, clsx("pl-[2px] text-left", SHRINK.includes(department) && "text-[12px]")],
    [area, "pr-[6px] text-right"],
    [1, "pr-[2px] text-right"],
    [area, "pr-[6px] text-right"],
    [height, "pr-[2px] text-right"],
    [length, "pr-[2px] text-right"],
    [length, "pr-[2px] text-right"],
    [dept, "text-center"],
    [area, "pr-[6px] text-right"],
    ["FLOOR 01", "pl-[2px] text-left"],
    [cost, "pr-[2px] text-right"],
  ];
  const shaded = row % 2 === 0;
  return cells.map(([value, cell], i) => {
    const thin = i === 0 || (i === 5 && THIN_F.includes(row));
    return (
      <td
        key={i}
        className={clsx(
          "relative overflow-hidden border-r border-b whitespace-nowrap",
          cell,
          shaded && "bg-[#d9d9d9]",
          i === 14 ? "border-r-[#7a7a7a]" : shaded ? "border-r-[#d9d9d9]" : "border-r-[#e1e1e1]",
          thin ? "border-b-[#c5daef]" : "border-b-[#7a7a7a]",
        )}
      >
        {i === 3 && (
          <svg width="6" height="6" viewBox="0 0 6 6" className="absolute top-0 left-0">
            <path d="M0 0h6L0 6z" fill="#0b8a0b" />
          </svg>
        )}
        {i === 14 && row === 25 && (
          <svg width="4" height="4" viewBox="0 0 4 4" className="absolute right-0 bottom-0">
            <path d="M4 0v4H0V2h2V0z" fill="#3b55b0" />
          </svg>
        )}
        {value}
      </td>
    );
  });
}

function Sheet() {
  const rows = Array.from({ length: 25 }, (_, i) => i + 2);
  return (
    <table className="w-full shrink-0 table-fixed border-separate border-spacing-0 bg-white font-[Lato] text-[13px] leading-[18px] text-black">
      <colgroup>
        <col className="w-[28px]" />
        {COLUMNS.map((c) => (
          <col key={c.id} className={c.width} />
        ))}
      </colgroup>
      <thead className="bg-[#e6e6e6] text-[14px] leading-[16px] text-[#333]">
        <tr className="h-[20px]">
          <th className="relative border-b border-[#8a8a8a] p-0">
            <svg width="15" height="15" viewBox="0 0 15 15" className="absolute right-[1px] bottom-[1px]">
              <path d="M15 0v15H0z" fill="#b1b1b1" />
            </svg>
          </th>
          {COLUMNS.map((c) => (
            <th
              key={c.id}
              className={clsx(
                "border-r border-r-[#c3c3c3] px-0 pt-[2px] pb-0 text-center font-normal",
                c.selected ? "border-b-2 border-b-[#217346] bg-[#d2d2d2] text-[#217346]" : "border-b border-b-[#8a8a8a]",
              )}
            >
              {c.id}
            </th>
          ))}
        </tr>
      </thead>
      <tbody>
        <tr className="h-[41px]">
          <RowNumber n={1} />
          {HEADINGS.map((h, i) => (
            <td
              key={h.text}
              className={clsx("border-b border-[#8a8a8a] p-0 align-bottom font-bold text-white", i < 7 ? "bg-[#c00000]" : "bg-black")}
            >
              <div className={clsx("flex overflow-hidden pb-[4px] whitespace-nowrap", h.cell)}>{h.text}</div>
            </td>
          ))}
          <Blank head />
          <Blank head />
          <Blank head />
          <td
            colSpan={2}
            className="overflow-hidden border-r border-b border-r-[#e1e1e1] border-b-[#9a9a9a] pl-[3px] text-[30px] leading-[36px] font-bold whitespace-nowrap"
          >
            Cost Information
          </td>
          <Blank head />
        </tr>
        {rows.map((row) => {
          const room = ROOMS[row - 2];
          const entry = ROOMS[row - 3];
          const shaded = row % 2 === 1 && !!entry;
          return (
            <tr key={row} className="h-[19px]">
              <RowNumber n={row} />
              {room ? <RoomCells room={room} row={row} /> : HEADINGS.map((h) => <Blank key={h.text} />)}
              <Blank />
              <Blank />
              <Blank />
              <td
                className={clsx(
                  "overflow-hidden border-r border-b border-r-[#e1e1e1] border-b-[#c5daef] whitespace-nowrap",
                  entry ? "pl-[5px]" : "pl-[2px]",
                  entry && SHRINK.includes(entry[2]) && "text-[12px]",
                  shaded && "bg-[#ddebf7]",
                )}
              >
                {entry ? entry[2] : "Name"}
              </td>
              <td
                className={clsx(
                  "border-r border-b border-[#e1e1e1] whitespace-nowrap",
                  entry ? "pr-[2px] text-right" : "pl-[2px] text-left",
                )}
              >
                {entry ? COSTS[row - 3] : "Cost/SF"}
              </td>
              <Blank />
            </tr>
          );
        })}
        <tr className="h-[19px]">
          <th className="border-r border-r-[#9a9a9a] bg-[#e6e6e6]" />
          {COLUMNS.map((c) => (
            <Blank key={c.id} />
          ))}
        </tr>
      </tbody>
    </table>
  );
}

export default function App() {
  return (
    <div className="flex h-screen flex-col overflow-hidden bg-white font-['Open_Sans',sans-serif]">
      <header className="relative shrink-0 border-b border-[#86b499] bg-[#217346]">
        <Artwork />
        <TitleBar />
        <TabStrip />
      </header>
      <div className="flex shrink-0 bg-[#f3f3f3] pr-[20px]">
        <ClipboardGroup />
        <FontGroup />
        <AlignmentGroup />
        <NumberGroup />
        <StylesGroup />
        <CellsGroup />
        <EditingGroup />
      </div>
      <FormulaBar />
      <Sheet />
    </div>
  );
}
